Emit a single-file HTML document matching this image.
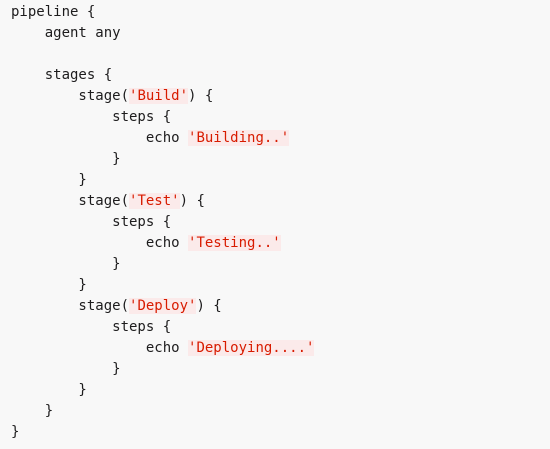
<html><head><style>
body{margin:0;background:#f8f8f8;}
pre{margin:0;padding:2px 0 0 11px;font-family:"DejaVu Sans Mono",monospace;font-size:14px;line-height:21px;color:#1d1c1d;}
.s{color:#d81b00;background:#fbeaea;}
</style></head><body><pre>pipeline {
    agent any

    stages {
        stage(<span class="s">'Build'</span>) {
            steps {
                echo <span class="s">'Building..'</span>
            }
        }
        stage(<span class="s">'Test'</span>) {
            steps {
                echo <span class="s">'Testing..'</span>
            }
        }
        stage(<span class="s">'Deploy'</span>) {
            steps {
                echo <span class="s">'Deploying....'</span>
            }
        }
    }
}</pre></body></html>
